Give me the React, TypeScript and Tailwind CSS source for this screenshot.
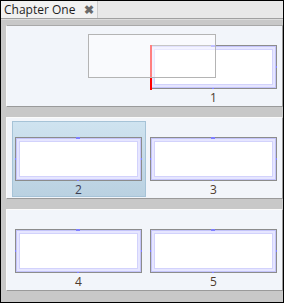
import React from "react";

const font = { fontFamily: '"Open Sans", "Noto Sans", "Liberation Sans", sans-serif' };

function Thumb() {
  return (
    <div className="relative w-[127px] h-[44px] border border-[#8c8c8c] bg-white">
      <div className="w-full h-full border border-[#c4c4fa] bg-[#e6e6ff] p-[2px]">
        <div className="w-full h-full border border-[#d2d2fc] bg-white" />
      </div>
      <span className="absolute left-[60px] top-[-1px] w-[4px] h-[2px] bg-[#8080ff]" />
      <span className="absolute left-[61px] bottom-[-1px] w-[2px] h-[1px] bg-[#8080ff]" />
      <span className="absolute left-[-1px] top-[20px] w-[1px] h-[2px] bg-[#8080ff]" />
      <span className="absolute right-[-1px] top-[20px] w-[1px] h-[2px] bg-[#8080ff]" />
    </div>
  );
}

function Card({ n, selected }: { n: string; selected?: boolean }) {
  return (
    <div
      className={
        "w-[134px] h-[76px] border pt-[15px] pl-[2px] flex flex-col " +
        (selected
          ? "border-[#a6c3d7] bg-gradient-to-b from-[#cfe3f0] to-[#bad1e1]"
          : "border-transparent")
      }
    >
      <Thumb />
      <div
        className={
          "w-[127px] h-[15px] text-center text-[12px] leading-[15px] pt-[1px] " +
          (selected ? "text-[#3a3d52]" : "text-[#4e3c2e]")
        }
      >
        {n}
      </div>
    </div>
  );
}

function Panel({ children, first }: { children: React.ReactNode; first?: boolean }) {
  return (
    <div
      className={
        "h-[82px] shrink-0 bg-[#f2f5fa] border border-l-[#fafafa] border-r-[#9a9a9a] border-b-[#9a9a9a] pl-[5px] pt-[3px] flex gap-[1px] " +
        (first ? "border-t-[#a8a8a8]" : "border-t-[#fbfbfb]")
      }
    >
      {children}
    </div>
  );
}

export default function App() {
  return (
    <div
      className="relative w-[284px] h-[303px] border border-black bg-[#c8c8c8] overflow-hidden flex flex-col"
      style={font}
    >
      <div className="h-[18px] shrink-0 bg-[#e8e8e8] border-b border-[#a0a0a0] flex">
        <div className="w-[97px] h-full bg-[#f1f1f1] border-r border-[#cdcdcd] flex items-center pl-[3px] pr-[3px]">
          <span className="text-[12px] leading-none text-[#1e1e1e]">Chapter One</span>
          <span className="ml-auto text-[12px] font-bold leading-none text-[#6a6a6a]">✖</span>
        </div>
      </div>
      <div className="h-[1px] shrink-0 bg-[#dcdcdc]" />
      <div className="flex flex-col gap-[10px] pt-[5px] pl-[5px]">
        <Panel first>
          <div className="w-[134px]" />
          <Card n="1" />
        </Panel>
        <Panel>
          <Card n="2" selected />
          <Card n="3" />
        </Panel>
        <Panel>
          <Card n="4" />
          <Card n="5" />
        </Panel>
      </div>
      <div className="absolute left-[149px] top-[44px] w-[2px] h-[45px] bg-[#ff0000]" />
      <div className="absolute left-[87px] top-[33px] w-[128px] h-[44px] border border-[#b4b4b4] bg-white/50" />
    </div>
  );
}
